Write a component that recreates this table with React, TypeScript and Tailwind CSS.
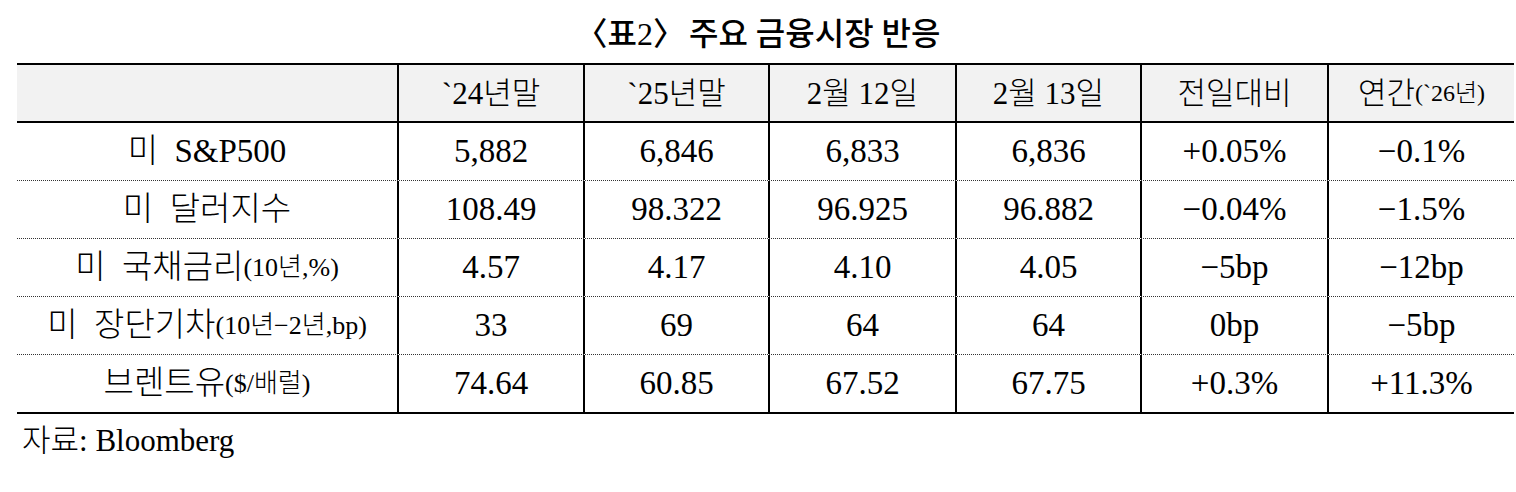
const cols = 'grid grid-cols-[380px_186px_185px_187px_185px_187px_187px]'

const headers = ['`24년말', '`25년말', '2월 12일', '2월 13일', '전일대비']

interface Row {
    label: string
    unit?: string
    values: string[]
}

const rows: Row[] = [
    { label: '미 S&P500', values: ['5,882', '6,846', '6,833', '6,836', '+0.05%', '−0.1%'] },
    { label: '미 달러지수', values: ['108.49', '98.322', '96.925', '96.882', '−0.04%', '−1.5%'] },
    { label: '미 국채금리', unit: '(10년,%)', values: ['4.57', '4.17', '4.10', '4.05', '−5bp', '−12bp'] },
    { label: '미 장단기차', unit: '(10년−2년,bp)', values: ['33', '69', '64', '64', '0bp', '−5bp'] },
    { label: '브렌트유', unit: '($/배럴)', values: ['74.64', '60.85', '67.52', '67.75', '+0.3%', '+11.3%'] },
]

export default function App() {
    return (
        <div className="h-[492px] w-[1516px] bg-white text-black font-light font-['Liberation_Serif','Noto_Sans_CJK_KR',serif]">
            <div className="flex h-[63px] items-center justify-center pt-[4px] text-[32px] font-medium leading-none whitespace-pre">
                <span>〈표2〉</span>
                <span className="-ml-[4px]"> 주요 금융시장 반응</span>
            </div>
            <div className="ml-[17px] w-[1497px]">
                <div className={`${cols} border-y-2 border-black bg-[#f2f2f2] text-[31px] leading-none`}>
                    <div className="h-[56px]" />
                    {headers.map((h) => (
                        <div key={h} className="flex h-[56px] items-center justify-center border-l-2 border-black">
                            {h}
                        </div>
                    ))}
                    <div className="flex h-[56px] items-center justify-center border-l-2 border-black">
                        연간<span className="text-[24px]">(`26년)</span>
                    </div>
                </div>
                <div className="border-b-2 border-black">
                    {rows.map((r, i) => (
                        <div
                            key={r.label}
                            className={`${cols} text-[33px] leading-none ${i > 0 ? 'border-t border-dotted border-[#333]' : ''}`}
                        >
                            <div className="flex h-[57px] items-center justify-center whitespace-pre">
                                {r.label.replace(' ', '  ')}
                                {r.unit && <span className="text-[26px]">{r.unit}</span>}
                            </div>
                            {r.values.map((v, j) => (
                                <div key={j} className="flex h-[57px] items-center justify-center border-l-2 border-black">
                                    {v}
                                </div>
                            ))}
                        </div>
                    ))}
                </div>
                <div className="pt-[11px] pl-[5px] text-[31px] leading-none">자료: Bloomberg</div>
            </div>
        </div>
    )
}
